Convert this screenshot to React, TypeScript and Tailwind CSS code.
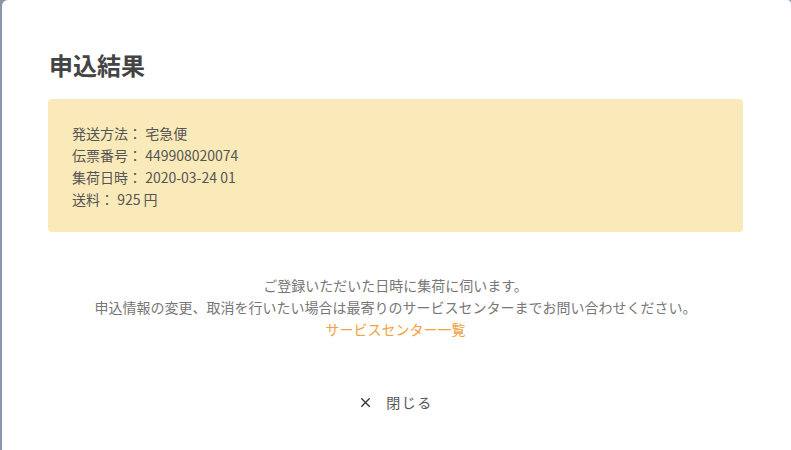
import { X } from "lucide-react"

const rows = [
  { label: "発送方法", value: "宅急便" },
  { label: "伝票番号", value: "449908020074" },
  { label: "集荷日時", value: "2020-03-24 01" },
  { label: "送料", value: "925 円" },
]

const App = () => {
  return (
    <div className="flex h-[450px] w-full bg-[#8a97a8] font-['Noto_Sans_CJK_JP','Noto_Sans',sans-serif]">
      <div className="ml-[2px] flex flex-1 flex-col rounded-tl-md rounded-tr-sm bg-white pt-[49px] pr-[48px] pl-[46px]">
        {/* Title */}
        <h1 className="pl-[1px] text-2xl leading-8 font-bold text-[#444]">申込結果</h1>

        {/* Result box */}
        <div className="mt-[18px] rounded bg-[#fbeab9] px-[24px] pt-[23px] pb-[22px] text-sm leading-[22px] text-[#555]">
          {rows.map((r) => (
            <div key={r.label}>
              {r.label}： {r.value}
            </div>
          ))}
        </div>

        {/* Notice */}
        <div className="mt-[42px] text-center text-sm leading-[22px] text-[#777]">
          <p>ご登録いただいた日時に集荷に伺います。</p>
          <p>申込情報の変更、取消を行いたい場合は最寄りのサービスセンターまでお問い合わせください。</p>
          <a href="#" className="text-[#f3a040]">サービスセンター一覧</a>
        </div>

        {/* Close */}
        <div className="mt-[42px] flex justify-center">
          <button className="flex h-10 items-center gap-[13px] px-2 text-sm text-[#555]">
            <X className="h-[15px] w-[15px] text-[#333]" strokeWidth={2.2} />
            <span className="tracking-[1.5px]">閉じる</span>
          </button>
        </div>
      </div>
    </div>
  )
}

export default App
